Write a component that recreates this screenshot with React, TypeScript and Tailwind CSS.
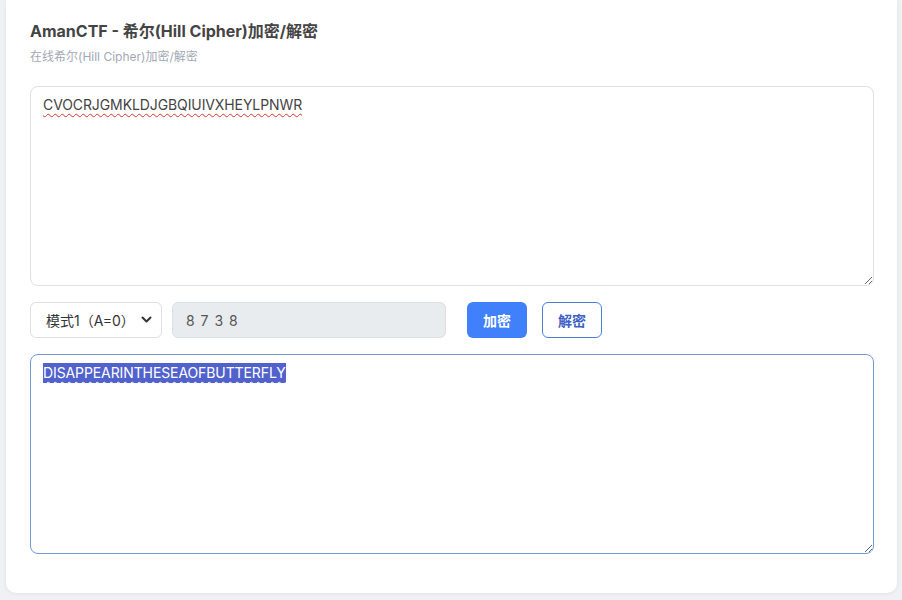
import React, { useEffect, useRef } from "react";

export default function App() {
  const outRef = useRef<HTMLTextAreaElement>(null);
  useEffect(() => {
    const el = outRef.current;
    if (el) {
      el.focus();
      el.select();
    }
  }, []);
  const font = { fontFamily: 'Inter, "Noto Sans CJK SC", sans-serif' };
  return (
    <div className="w-[902px] h-[600px] bg-[#f0f1f4] pl-[6px] pr-[5px] pb-[7px]" style={font}>
      <div className="h-full bg-white rounded-b-[10px] shadow-[0_1px_4px_rgba(0,0,0,0.06)] pl-[24px] pr-[23px] pt-[19px]">
        <h1 className="text-[16px] leading-[24px] font-bold text-[#444]">AmanCTF - 希尔(Hill Cipher)加密/解密</h1>
        <p className="mt-[6px] text-[12px] leading-[16px] text-[#a3a8b5]">在线希尔(Hill Cipher)加密/解密</p>
        <textarea
          defaultValue="CVOCRJGMKLDJGBQIUIVXHEYLPNWR"
          spellCheck={false}
          className="mt-[21px] block w-full h-[200px] border border-[#dcdfe4] rounded-[8px] px-[12px] py-[8px] text-[14px] leading-[20px] text-[#444] tracking-[-0.1px] outline-none underline decoration-wavy decoration-[#d9342b] underline-offset-[3px] decoration-1"
          style={font}
        />
        <div className="mt-[16px] flex items-center h-[36px]">
          <div className="relative w-[132px] h-[36px]">
            <select
              className="appearance-none w-full h-full border border-[#dcdfe4] rounded-[6px] bg-white pl-[15px] text-[14px] text-[#333] outline-none"
              style={font}
              defaultValue="1"
            >
              <option value="1">模式1（A=0）</option>
              <option value="2">模式2（A=1）</option>
            </select>
            <svg className="absolute right-[10px] top-[14px] pointer-events-none" width="11" height="8" viewBox="0 0 11 8">
              <path d="M1.5 1.5 L5.5 5.5 L9.5 1.5" fill="none" stroke="#333" strokeWidth="2" strokeLinecap="round" strokeLinejoin="round" />
            </svg>
          </div>
          <input
            defaultValue="8 7 3 8"
            className="ml-[10px] w-[274px] h-[36px] bg-[#e9ecef] border border-[#dcdfe4] rounded-[6px] px-[13px] text-[14px] text-[#555] tracking-[1px] outline-none"
            style={font}
          />
          <button className="ml-[21px] w-[60px] h-[36px] rounded-[6px] bg-[#4080fa] text-white text-[14px] font-bold">加密</button>
          <button className="ml-[15px] w-[60px] h-[36px] rounded-[6px] bg-white border border-[#4a7fd4] text-[#3d62c4] text-[14px] font-bold">解密</button>
        </div>
        <textarea
          ref={outRef}
          defaultValue="DISAPPEARINTHESEAOFBUTTERFLY"
          spellCheck={false}
          className="mt-[16px] block w-full h-[200px] border border-[#7399d8] rounded-[8px] px-[12px] py-[8px] text-[14px] leading-[20px] text-[#444] tracking-[-0.1px] outline-none underline decoration-wavy decoration-[#d9342b] underline-offset-[3px] decoration-1 selection:bg-[#5262cc] selection:text-white"
          style={font}
        />
      </div>
    </div>
  );
}
